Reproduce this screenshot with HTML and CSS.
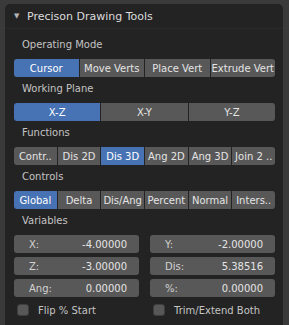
FILE: index.html
```html
<!DOCTYPE html>
<html>
<head>
    <title>Precison Drawing Tools</title>
    <link rel="stylesheet" href="styles.css">
</head>
<body>
    <div class="panel">
        <div class="panel-header">
            <span class="arrow">&#9660;</span>
            <span class="title">Precison Drawing Tools</span>
        </div>

        <div class="panel-body">
            <div class="label">Operating Mode</div>
            <div class="row">
                <button class="btn active">Cursor</button>
                <button class="btn">Move Verts</button>
                <button class="btn">Place Vert</button>
                <button class="btn">Extrude Vert</button>
            </div>

            <div class="label">Working Plane</div>
            <div class="row">
                <button class="btn active">X-Z</button>
                <button class="btn">X-Y</button>
                <button class="btn">Y-Z</button>
            </div>

            <div class="label">Functions</div>
            <div class="row">
                <button class="btn">Contr..</button>
                <button class="btn">Dis 2D</button>
                <button class="btn active">Dis 3D</button>
                <button class="btn">Ang 2D</button>
                <button class="btn">Ang 3D</button>
                <button class="btn">Join 2 ..</button>
            </div>

            <div class="label">Controls</div>
            <div class="row">
                <button class="btn active">Global</button>
                <button class="btn">Delta</button>
                <button class="btn">Dis/Ang</button>
                <button class="btn">Percent</button>
                <button class="btn">Normal</button>
                <button class="btn">Inters..</button>
            </div>

            <div class="label">Variables</div>
            <div class="fields">
                <div class="field"><span>X:</span><span>-4.00000</span></div>
                <div class="field"><span>Y:</span><span>-2.00000</span></div>
                <div class="field"><span>Z:</span><span>-3.00000</span></div>
                <div class="field"><span>Dis:</span><span>5.38516</span></div>
                <div class="field"><span>Ang:</span><span>0.00000</span></div>
                <div class="field"><span>%:</span><span>0.00000</span></div>
            </div>

            <div class="checks">
                <label class="check"><span class="box"></span>Flip % Start</label>
                <label class="check"><span class="box"></span>Trim/Extend Both</label>
            </div>
        </div>
    </div>
</body>
</html>
```

FILE: styles.css
```css
/* GENERAL */
body {
    margin: 0;
    padding: 0;
    width: 289px;
    height: 325px;
    overflow: hidden;
    background-color: #3a3a3a;
    font-family: 'DejaVu Sans', sans-serif;
}

.panel {
    margin: 4px 6px 0 5px;
    height: 321px;
    background-color: #232323;
    border-radius: 5px 5px 0 0;
}

/* HEADER */
.panel-header {
    height: 25px;
    display: flex;
    align-items: center;
    padding-left: 9px;
    border-bottom: 1px solid #2b2b2b;
    box-sizing: border-box;
}

.arrow {
    font-size: 7px;
    color: #b4b4b4;
    width: 13px;
}

.title {
    font-size: 11px;
    color: #dcdcdc;
}

/* BODY */
.panel-body {
    padding: 4px 8px 0 9px;
}

.label {
    font-size: 10px;
    line-height: 14px;
    padding: 5px 0 7px 8px;
    color: #c4c4c4;
}

/* BUTTON ROWS */
.row {
    display: flex;
    gap: 1px;
    height: 18px;
}

.btn {
    flex: 1;
    margin: 0;
    padding: 0;
    border: none;
    background-color: #585858;
    color: #e4e4e4;
    font-family: 'DejaVu Sans', sans-serif;
    font-size: 10px;
    white-space: nowrap;
    overflow: hidden;
}

.btn:first-child {
    border-radius: 3px 0 0 3px;
}

.btn:last-child {
    border-radius: 0 3px 3px 0;
}

.btn.active {
    background-color: #4772b3;
    color: #ffffff;
}

/* VARIABLES */
.fields {
    display: grid;
    grid-template-columns: 1fr 1fr;
    column-gap: 11px;
    row-gap: 4px;
}

.field {
    height: 18px;
    display: flex;
    align-items: center;
    justify-content: space-between;
    padding: 0 12px 0 15px;
    background-color: #585858;
    border-radius: 3px;
    font-size: 10px;
    color: #e4e4e4;
}

.field span:first-child {
    color: #d2d2d2;
}

/* CHECKBOXES */
.checks {
    display: grid;
    grid-template-columns: 1fr 1fr;
    column-gap: 11px;
    margin-top: 7px;
}

.check {
    display: flex;
    align-items: center;
    gap: 9px;
    padding-left: 3px;
    font-size: 10px;
    color: #c4c4c4;
}

.box {
    width: 12px;
    height: 12px;
    background-color: #585858;
    border-radius: 3px;
    box-sizing: border-box;
    border: 1px solid #3e3e3e;
}
```
